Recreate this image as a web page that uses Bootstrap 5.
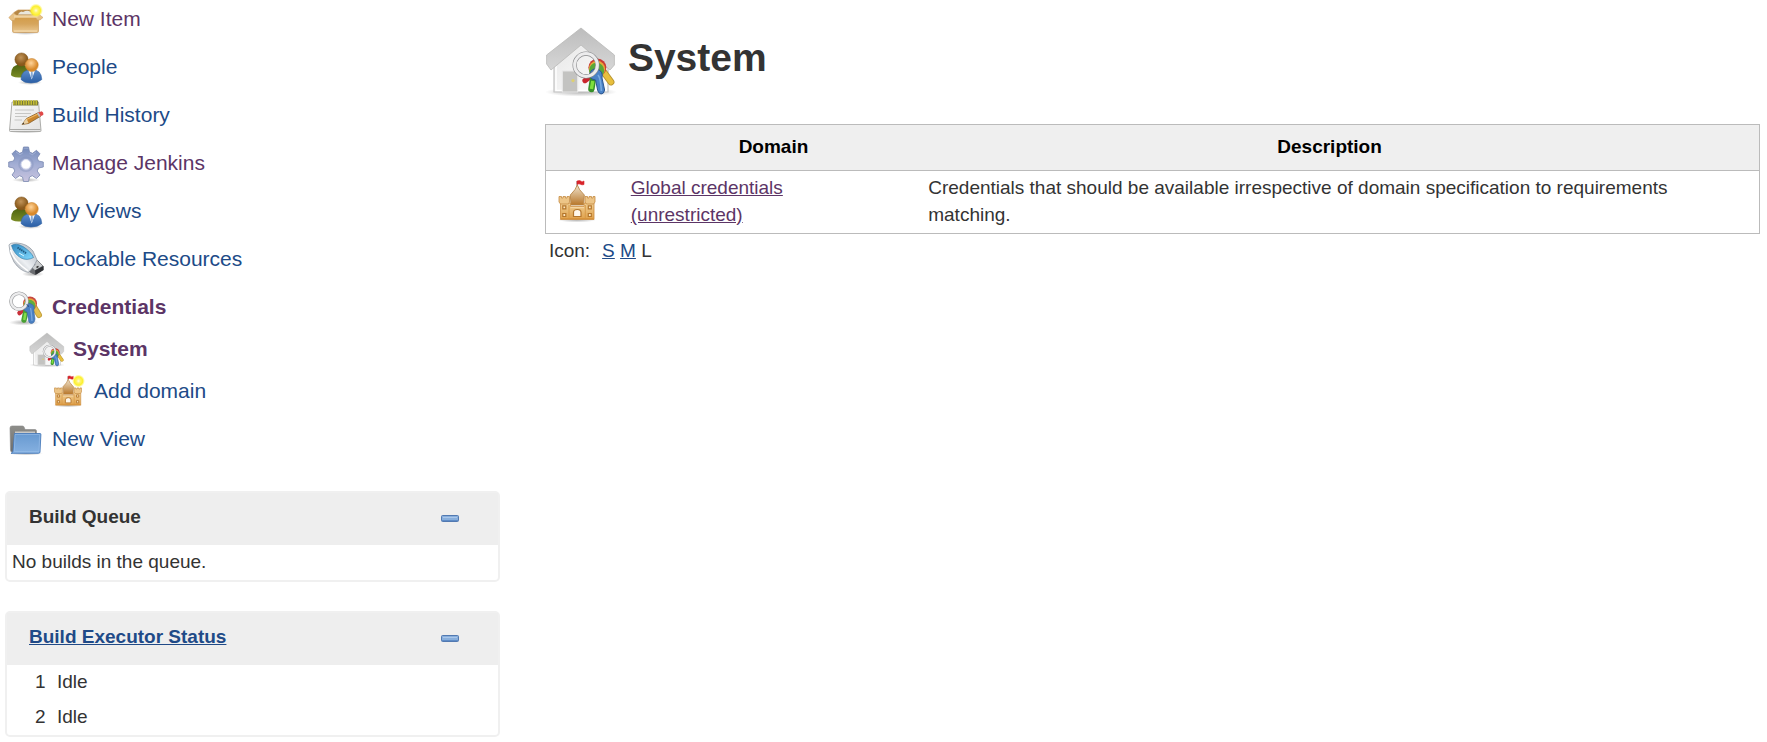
<!DOCTYPE html>
<html lang="en">
<head>
<meta charset="utf-8">
<meta name="viewport" content="width=device-width, initial-scale=1">
<title>System credentials [Jenkins]</title>
<link href="https://cdn.jsdelivr.net/npm/bootstrap@5.3.0/dist/css/bootstrap.min.css" rel="stylesheet">
<style>
  body { font-family: "Liberation Sans", Arial, sans-serif; font-size: 19px; line-height: 27px; color: #333; background: #fff; }
  a { color: #204a87; }
  a:hover { color: #204a87; }
  a.seen { color: #5c3566; }
  .page { gap: 45px; padding: 2px 7px 3px 5px; }
  .side { flex: 0 0 28.2%; }
  .task { display: flex; align-items: center; height: 36px; margin: 0 0 12px 3px; font-size: 21px; }
  .task a { display: flex; align-items: center; gap: 8px; text-decoration: none; line-height: 24px; padding-bottom: 2px; }
  .task svg { width: 36px; height: 36px; flex: none; margin-top: 2px; }
  .tight { margin-bottom: 6px; }
  .sub1 { margin-left: 24px; }
  .sub2 { margin-left: 45px; }
  .panes { padding-top: 33px; }
  .pane { border: 2px solid #f0f0f0; border-radius: 5px; margin-bottom: 29px; }
  .pane-top { background: #eee; height: 52px; padding: 0 39px 5px 22px; }
  .pane-top h2 { font-size: 19px; line-height: 27px; font-weight: 700; margin: 0; }
  .pane-body { padding: 3px 5px 5px; }
  .fold { border: 0; background: none; padding: 0; display: flex; margin-top: 4px; }
  .execs td { padding: 3px 0 5px; }
  .execs td:first-child { width: 50px; padding-left: 28px; }
  .content-area { min-width: 0; padding-top: 22px; }
  .content-area h1 { font-size: 39px; line-height: 48px; font-weight: 700; margin: 0; padding-top: 10px; }
  .head-row { gap: 11px; margin-bottom: 26px; height: 74px; }
  .head-row svg { width: 72px; height: 72px; margin-top: 2px; }
  .domains { width: 100%; border: 1px solid #bbb; table-layout: fixed; }
  .domains th { background: #efefef; color: #000; text-align: center; border-bottom: 1px solid #bbb; padding: 8px 8px 10px 4px; }
  .domains td { padding: 3px 4px 5px; vertical-align: top; border: 0; }
  .domains td.pic { vertical-align: middle; padding: 0 7px; }
  .pic svg { width: 48px; height: 48px; display: block; }
  .sizes { padding: 3px 4px; }
</style>
</head>
<body>
<svg width="0" height="0" class="position-absolute" aria-hidden="true">
  <defs>
    <linearGradient id="gBox" x1="0" y1="0" x2="0" y2="1"><stop offset="0" stop-color="#d29a45"/><stop offset=".5" stop-color="#d6a55c"/><stop offset="1" stop-color="#ebc993"/></linearGradient>
    <radialGradient id="gSun"><stop offset="0" stop-color="#fffde0"/><stop offset=".3" stop-color="#fff46b"/><stop offset=".65" stop-color="#fcf02d"/><stop offset="1" stop-color="#fff36b" stop-opacity="0"/></radialGradient>
    <radialGradient id="gBrown" cx=".45" cy=".35"><stop offset="0" stop-color="#c29459"/><stop offset="1" stop-color="#8a5a1c"/></radialGradient>
    <radialGradient id="gOrange" cx=".45" cy=".35"><stop offset="0" stop-color="#ffd49a"/><stop offset="1" stop-color="#d98a2b"/></radialGradient>
    <linearGradient id="gGreen" x1="0" y1="0" x2="0" y2="1"><stop offset="0" stop-color="#4c6310"/><stop offset="1" stop-color="#7b8c25"/></linearGradient>
    <linearGradient id="gBlue" x1="0" y1="0" x2="0" y2="1"><stop offset="0" stop-color="#5e8fcd"/><stop offset="1" stop-color="#2a5ea5"/></linearGradient>
    <linearGradient id="gFolder" x1="0" y1="0" x2="0" y2="1"><stop offset="0" stop-color="#6799d0"/><stop offset="1" stop-color="#86b1e1"/></linearGradient>
    <linearGradient id="gGrey" x1="0" y1="0" x2="0" y2="1"><stop offset="0" stop-color="#8e8e8a"/><stop offset="1" stop-color="#6c6c6a"/></linearGradient>
    <linearGradient id="gGear" x1="0" y1="0" x2="0" y2="1"><stop offset="0" stop-color="#7389b9"/><stop offset=".5" stop-color="#a3aed4"/><stop offset="1" stop-color="#c9c4df"/></linearGradient>
    <linearGradient id="gPaper" x1="0" y1="0" x2="1" y2="1"><stop offset="0" stop-color="#fafafa"/><stop offset="1" stop-color="#e2e2e2"/></linearGradient>
    <linearGradient id="gRoof" x1="0" y1="0" x2="0" y2="1"><stop offset="0" stop-color="#bdbdbd"/><stop offset="1" stop-color="#d6d6d6"/></linearGradient>
    <linearGradient id="gWall" x1="0" y1="0" x2="1" y2="1"><stop offset="0" stop-color="#e6e6e6"/><stop offset="1" stop-color="#fdfdfd"/></linearGradient>
    <linearGradient id="gCastle" x1="0" y1="0" x2="0" y2="1"><stop offset="0" stop-color="#f0cf95"/><stop offset="1" stop-color="#dfa04a"/></linearGradient>
    <linearGradient id="gTower" x1="0" y1="0" x2="0" y2="1"><stop offset="0" stop-color="#f0e4cf"/><stop offset="1" stop-color="#b8772a"/></linearGradient>
    <linearGradient id="gUsb" x1="0" y1="1" x2="1" y2="0"><stop offset="0" stop-color="#8d949c"/><stop offset=".45" stop-color="#edf0f3"/><stop offset="1" stop-color="#a9b0ba"/></linearGradient>
    <linearGradient id="gLabel" x1="0" y1="0" x2="1" y2="1"><stop offset="0" stop-color="#3187c0"/><stop offset="1" stop-color="#83dbff"/></linearGradient>
    <radialGradient id="gShade"><stop offset="0" stop-color="#555" stop-opacity=".45"/><stop offset="1" stop-color="#555" stop-opacity="0"/></radialGradient>
  </defs>

  <symbol id="i-box" viewBox="0 0 36 36">
    <ellipse cx="17.500" cy="30.500" rx="15" ry="2.500" fill="url(#gShade)"/>
    <path d="M6 10.500 10 8H27L31 11.500 30.500 16H5.500z" fill="#b58746" stroke="#c9995a" stroke-width=".7"/>
    <path d="M11 11Q13 8.500 15 10Q19 8 22 9.500L24.500 12.500H10z" fill="#e9e6dc"/>
    <path d="M4.500 13.500H30.500V29Q30.500 30.500 29 30.500H6Q4.500 30.500 4.500 29z" fill="url(#gBox)" stroke="#c4914d" stroke-width=".6"/>
    <path d="M5.500 11 .8 15.500 3.500 18.500H6.500L8.500 13z" fill="#e7c184" stroke="#c9995a" stroke-width=".5"/>
    <path d="M30 11.500 35 15.500 32 18H29L26.500 13z" fill="#e7c184" stroke="#c9995a" stroke-width=".5"/>
    <path d="M6 14.500H29.500" stroke="#efd2a0" stroke-width="2.500"/>
    <path d="M6 29H29" stroke="#f7dfb4" stroke-width="1"/>
    <circle cx="28" cy="8.500" r="7" fill="url(#gSun)"/>
  </symbol>

  <symbol id="i-people" viewBox="0 0 36 36">
    <ellipse cx="22" cy="32.500" rx="12" ry="2.500" fill="url(#gShade)"/>
    <path d="M3 24.500Q3 14 13 14.500Q22 15 22 25Q18 28 10.500 27.500Q3 27 3 24.500z" fill="url(#gGreen)"/>
    <circle cx="13.500" cy="9.500" r="6.600" fill="url(#gBrown)" stroke="#7d521a" stroke-width=".5"/>
    <path d="M13 29.500Q13 19.500 23.500 19.500Q33.500 19.500 33.800 29.500Q30 33 23 33Q16 33 13 29.500z" fill="url(#gBlue)" stroke="#3465a4" stroke-width=".6"/>
    <path d="M20.500 20.500 23.700 29.500 27 20.500z" fill="#f5f8fc"/>
    <path d="M23.100 21.500h1.400l.5 4.500-1.200 3-1.200-3z" fill="#86a9d4"/>
    <circle cx="23.700" cy="15" r="6.500" fill="url(#gOrange)" stroke="#c98432" stroke-width=".6"/>
  </symbol>

  <symbol id="i-note" viewBox="0 0 36 36">
    <ellipse cx="17.500" cy="33.500" rx="17" ry="2" fill="url(#gShade)"/>
    <path d="M4 4H30.500L33 32.500Q33 33.500 32 33.500H2.500Q1.500 33.500 1.500 32.500z" fill="url(#gPaper)" stroke="#a5a5a2" stroke-width=".9"/>
    <path d="M2 31.500H32.500" stroke="#a9a9a7" stroke-width="1"/>
    <path d="M7 12H26M7 15.500H23M7 18.500H19M6.500 22H14" stroke="#c6c6c4" stroke-width="1"/>
    <path d="M5 5H30" stroke="#787a38" stroke-width="5"/>
    <path d="M5 4.500H30" stroke="#c5bd35" stroke-width="4.500" stroke-dasharray="1.500 1"/>
    <path d="M14 26.500 18.500 20.500 30.500 14.500 33 18 20.500 25.500z" fill="#c9852d" stroke="#7d5420" stroke-width=".7"/>
    <path d="M18.500 21.500 31 15.500" stroke="#efb660" stroke-width="1.200"/>
    <path d="M14 26.500 18.500 20.500 20.500 25z" fill="#ead1a4"/>
    <path d="M14 26.500l1.500-2 .8 1.200z" fill="#333"/>
    <path d="M30 14.800 33.500 13.200Q36 14.500 35.200 17L32 18.600z" fill="#e04848"/>
    <path d="M29 15.300 30.500 14.500 32.600 18 31 19z" fill="#b9bcc0"/>
  </symbol>

  <symbol id="i-gear" viewBox="0 0 36 36">
    <ellipse cx="18" cy="34" rx="14" ry="2.200" fill="url(#gShade)"/>
    <path fill="url(#gGear)" stroke="#7a89b1" stroke-width=".8" stroke-linejoin="round" d="M15.500 1H20.500L21.500 6 24.500 7.300 28.500 4.300 32 7.800 29.200 12 30.500 15 35.300 16V21L30.500 22 29.200 25 32 29 28.500 32.500 24.300 29.700 21.500 31 20.500 35.500H15.500L14.500 31 11.500 29.700 7.500 32.500 4 29 6.800 25 5.500 22 .7 21V16L5.500 15 6.800 12 4 7.800 7.500 4.300 11.700 7.300 14.500 6z"/>
    <circle cx="18" cy="18.300" r="7" fill="none" stroke="#8390ba" stroke-opacity=".4" stroke-width="1.600"/>
    <circle cx="18" cy="18.300" r="4.800" fill="#fff" stroke="#d9def0" stroke-width="1"/>
    <path d="M16 2.200H20M8 6 12 8.700 14.800 7M21.500 7.300 24.500 8.700 28 6" fill="none" stroke="#b6c1df" stroke-width=".6"/>
  </symbol>

  <symbol id="i-usb" viewBox="0 0 36 36">
    <ellipse cx="25" cy="32" rx="11" ry="2.800" fill="url(#gShade)"/>
    <path d="M19.500 23 29.500 18.500 35.500 24.500V28L27 33 21 30z" fill="#6a6c70"/>
    <path d="M20.500 22.500 29.500 18.500 35 24 27 28.500z" fill="#c9ccce" stroke="#55585c" stroke-width=".5"/>
    <path d="M27 28.500 35.500 24V28L27.500 33z" fill="#303236"/>
    <path d="M25 23 27 22M28.500 25.500 30.500 24.400" stroke="#333" stroke-width="1.500"/>
    <path d="M1 3Q2 .5 9 1Q19 1.500 25 9L29 18Q27 23.500 20.500 30.500Q12 29 6 20Q1 11 1 3z" fill="url(#gUsb)" stroke="#8b939d" stroke-width=".7"/>
    <path d="M2.500 8Q6 19.500 20 28.800" fill="none" stroke="#fff" stroke-width="1.500"/>
    <path d="M3.500 3.500Q8 .5 15 4.500Q23.500 10 25.500 15.500Q19 19 13 16Q6 12 3.500 3.500z" fill="url(#gLabel)" stroke="#2d769f" stroke-width=".6"/>
    <path d="M9.500 5.500 18.500 11.500" stroke="#205d85" stroke-width="2" stroke-dasharray="1.500 .7"/>
    <path d="M11 11 16 14" stroke="#d8f5ff" stroke-width="1"/>
  </symbol>

  <symbol id="i-keys" viewBox="0 0 36 36">
    <ellipse cx="16" cy="32.500" rx="15" ry="3" fill="url(#gShade)"/>
    <path d="M16 19 11.500 23" stroke="#c9303a" stroke-width="4.500" stroke-linecap="round"/>
    <path d="M25 15 31 25" stroke="#c3a03b" stroke-width="6" stroke-linecap="round"/>
    <path d="M25 15 31 25" stroke="#e3be4e" stroke-width="4.200" stroke-linecap="round"/>
    <circle cx="22" cy="13.500" r="7" fill="#c74740"/>
    <circle cx="21.700" cy="14.500" r="6.200" fill="#e8a63a"/>
    <circle cx="21.500" cy="15.500" r="5.800" fill="#5fae3e"/>
    <path d="M18.500 18 16 30" stroke="#48a033" stroke-width="5.400" stroke-linecap="round"/>
    <path d="M17.500 23 16.200 30" stroke="#83dd48" stroke-width="2.400"/>
    <path d="M15.500 17Q17.500 12.500 22 13.500Q27.500 15 25.800 20.500L27 29Q26.500 33.500 23 33.500Q20.500 33 20.500 30L19 22Q15 20.500 15.500 17z" fill="#4a80c2" stroke="#3a66a0" stroke-width=".6"/>
    <path d="M22.500 18Q23.500 22 24 31" fill="none" stroke="#79a6dc" stroke-width="1.300"/>
    <circle cx="11" cy="11.300" r="8" fill="none" stroke="#96989a" stroke-width="3.600"/>
    <circle cx="11" cy="11.300" r="8" fill="none" stroke="#ececed" stroke-width="2.400"/>
    <path d="M18.500 14.500Q20.500 15 20.500 17" fill="none" stroke="#2f568c" stroke-width="1.200"/>
  </symbol>

  <symbol id="i-home" viewBox="0 0 36 36">
    <ellipse cx="18" cy="33" rx="18" ry="2.300" fill="url(#gShade)"/>
    <path d="M4.500 17 18 6 31.500 17V33H4.500z" fill="url(#gWall)" stroke="#c2c2c2" stroke-width=".6"/>
    <path d="M5.500 18V32.200H30.500V18" fill="none" stroke="#fff" stroke-width=".7"/>
    <path d="M8.700 22.500H16.300V33H8.700z" fill="#c3c3c1" stroke="#e5e5e5" stroke-width=".6"/>
    <circle cx="14" cy="27.300" r=".8" fill="#ded070"/>
    <path d="M18 1 34.700 14.500V19.500L32.500 22 18 9.500 3 22 .8 19V14.500z" fill="url(#gRoof)" stroke="#b9b9b7" stroke-width=".4" stroke-linejoin="round"/>
    <path d="M23 25 20 27.300" stroke="#c9252d" stroke-width="2.600" stroke-linecap="round"/>
    <path d="M29 22.500 33 28" stroke="#b5922f" stroke-width="3.400" stroke-linecap="round"/>
    <path d="M29 22.500 33 28" stroke="#e8bf3d" stroke-width="2.500" stroke-linecap="round"/>
    <circle cx="26.200" cy="20.800" r="4.500" fill="#c93a35"/>
    <circle cx="26" cy="21.500" r="4.100" fill="#e8a63a"/>
    <circle cx="25.800" cy="22.200" r="3.800" fill="#58a838"/>
    <path d="M24.200 25 23.200 31.500" stroke="#37912a" stroke-width="3.200" stroke-linecap="round"/>
    <path d="M23.900 27.500 23.200 31.500" stroke="#7fdf3d" stroke-width="1.700"/>
    <path d="M22.300 24Q23.300 21 26 21.500Q29.200 22.500 28.500 26L29.800 32Q29.500 34 28 34Q26.500 33.500 26.300 32L25.300 27Q22 26.500 22.300 24z" fill="#4a82c7" stroke="#2c5690" stroke-width=".5"/>
    <path d="M26.500 24.500Q27.800 26 28.200 32.500" fill="none" stroke="#78aae0" stroke-width=".8"/>
    <circle cx="20.500" cy="19.500" r="5.700" fill="none" stroke="#88898b" stroke-width="2.100"/>
    <circle cx="20.500" cy="19.500" r="5.700" fill="none" stroke="#ececed" stroke-width="1.500"/>
  </symbol>

  <symbol id="i-castle" viewBox="0 0 48 48">
    <ellipse cx="24" cy="42" rx="19" ry="2.500" fill="url(#gShade)"/>
    <path d="M24 3V9" stroke="#888" stroke-width="1"/>
    <path d="M24 3Q27 2 28 3.200T31 3V6.500Q29 7.300 27.500 6.300T24 6.500z" fill="#d8232a" stroke="#d8232a" stroke-width=".6"/>
    <path d="M24.300 7Q23 11.500 17.300 17L18 27H30.500L31.300 17Q25.600 11.500 24.300 7z" fill="url(#gTower)" stroke="#b98645" stroke-width=".9"/>
    <path d="M7.500 25H17.500V28.500H31V25H41V41.500H7.500z" fill="url(#gCastle)" stroke="#cb8c3d" stroke-width=".8"/>
    <path d="M6 18.500H8.500V20H10V18.500H12.500V20H14V18.500H16.500V24L15.500 26H7.500L6 24z" fill="#edc587" stroke="#c58b42" stroke-width=".8"/>
    <path d="M32 18.500H34.500V20H36V18.500H38.500V20H40V18.500H42V24L40.500 26H33.500L32 24z" fill="#edc587" stroke="#c58b42" stroke-width=".8"/>
    <path d="M17.500 29.500H31" stroke="#f5d6a2" stroke-width="1.200"/>
    <path d="M16 27V41M32.300 27V41" stroke="#d79845" stroke-width=".9"/>
    <g fill="#fae5bf" stroke="#b4762c" stroke-width="1.200"><path d="M9.800 27.800h3v3h-3zM9.800 35.500h3v3h-3zM35.300 27.800h3v3h-3zM35.300 35.500h3v3h-3z"/></g>
    <path d="M20.500 38.500V34.500Q20.500 31.500 24.300 31.500T28 34.500V38.500z" fill="#fff8eb" stroke="#b4762c" stroke-width="1.200"/>
    <path d="M8 40.500H40.500" stroke="#d7933b" stroke-width="1.200"/>
  </symbol>

  <symbol id="i-folder" viewBox="0 0 36 36">
    <ellipse cx="18" cy="31.500" rx="17" ry="2" fill="url(#gShade)"/>
    <path d="M2 6Q2 4 4 4H14.500Q16 4 16.500 6L17 7.500H27Q28.500 7.500 28.500 9V30H4Q2.500 30 2.500 28z" fill="url(#gGrey)" stroke="#888" stroke-width=".6"/>
    <path d="M7 9.500H27V13H7z" fill="#c9c9c7"/>
    <path d="M6.500 11.500H32Q33 11.500 32.900 12.500L32 30Q32 31.300 30.500 31.300H3Q5 31 5 29z" fill="url(#gFolder)" stroke="#4b7dbb" stroke-width=".9"/>
    <path d="M7 12.500H31.700L31 29.500H6.300z" fill="none" stroke="#9bc0ea" stroke-width=".6"/>
  </symbol>

  <symbol id="i-minus" viewBox="0 0 18 7">
    <rect x=".5" y=".5" width="17" height="6" rx="1" fill="#88afdd" stroke="#5279b1"/>
    <path d="M2 2.500H16" stroke="#a9c6ea" stroke-width="1"/>
    <path d="M1 5.500H17" stroke="#5f8cc6" stroke-width="1"/>
  </symbol>
</svg>

<div class="page d-flex align-items-start">
  <aside class="side">
    <nav aria-label="Tasks">
      <div class="task"><a href="#" class="seen"><svg aria-hidden="true"><use href="#i-box"/></svg>New Item</a></div>
      <div class="task"><a href="#"><svg aria-hidden="true"><use href="#i-people"/></svg>People</a></div>
      <div class="task"><a href="#"><svg aria-hidden="true"><use href="#i-note"/></svg>Build History</a></div>
      <div class="task"><a href="#" class="seen"><svg aria-hidden="true"><use href="#i-gear"/></svg>Manage Jenkins</a></div>
      <div class="task"><a href="#"><svg aria-hidden="true"><use href="#i-people"/></svg>My Views</a></div>
      <div class="task"><a href="#"><svg aria-hidden="true"><use href="#i-usb"/></svg>Lockable Resources</a></div>
      <div class="task tight"><a href="#" class="seen fw-bold"><svg aria-hidden="true"><use href="#i-keys"/></svg>Credentials</a></div>
      <div class="task tight sub1"><a href="#" class="seen fw-bold"><svg aria-hidden="true"><use href="#i-home"/></svg>System</a></div>
      <div class="task sub2"><a href="#"><svg viewBox="0 0 36 36" aria-hidden="true"><use href="#i-castle" width="36" height="36"/><circle cx="28.500" cy="7" r="6.500" fill="url(#gSun)"/></svg>Add domain</a></div>
      <div class="task mb-0"><a href="#"><svg aria-hidden="true"><use href="#i-folder"/></svg>New View</a></div>
    </nav>

    <div class="panes">
      <section class="pane">
        <div class="pane-top d-flex align-items-center justify-content-between">
          <h2>Build Queue</h2>
          <button type="button" class="fold" aria-label="Collapse build queue"><svg width="18" height="7"><use href="#i-minus"/></svg></button>
        </div>
        <p class="pane-body mb-0">No builds in the queue.</p>
      </section>

      <section class="pane mb-0">
        <div class="pane-top d-flex align-items-center justify-content-between">
          <h2><a href="#">Build Executor Status</a></h2>
          <button type="button" class="fold" aria-label="Collapse build executor status"><svg width="18" height="7"><use href="#i-minus"/></svg></button>
        </div>
        <table class="execs w-100">
          <tbody>
            <tr><td>1</td><td>Idle</td></tr>
            <tr><td>2</td><td>Idle</td></tr>
          </tbody>
        </table>
      </section>
    </div>
  </aside>

  <main class="content-area flex-grow-1">
    <div class="head-row d-flex">
      <svg class="flex-shrink-0" aria-hidden="true"><use href="#i-home"/></svg>
      <h1>System</h1>
    </div>
    <table class="domains">
      <colgroup><col style="width:6.7%"><col style="width:24.5%"><col><col style="width:1.7%"></colgroup>
      <thead><tr><th aria-label="Icon"></th><th scope="col">Domain</th><th scope="col">Description</th><th class="p-0"></th></tr></thead>
      <tbody>
        <tr>
          <td class="pic"><svg aria-hidden="true"><use href="#i-castle"/></svg></td>
          <td><a href="#" class="seen">Global credentials<br>(unrestricted)</a></td>
          <td>Credentials that should be available irrespective of domain specification to requirements matching.</td>
          <td class="p-0"></td>
        </tr>
      </tbody>
    </table>
    <div class="sizes d-flex"><span class="me-2 pe-1">Icon:</span><span><a href="#">S</a> <a href="#">M</a> L</span></div>
  </main>
</div>
<script src="https://cdn.jsdelivr.net/npm/bootstrap@5.3.0/dist/js/bootstrap.bundle.min.js"></script>
</body>
</html>
